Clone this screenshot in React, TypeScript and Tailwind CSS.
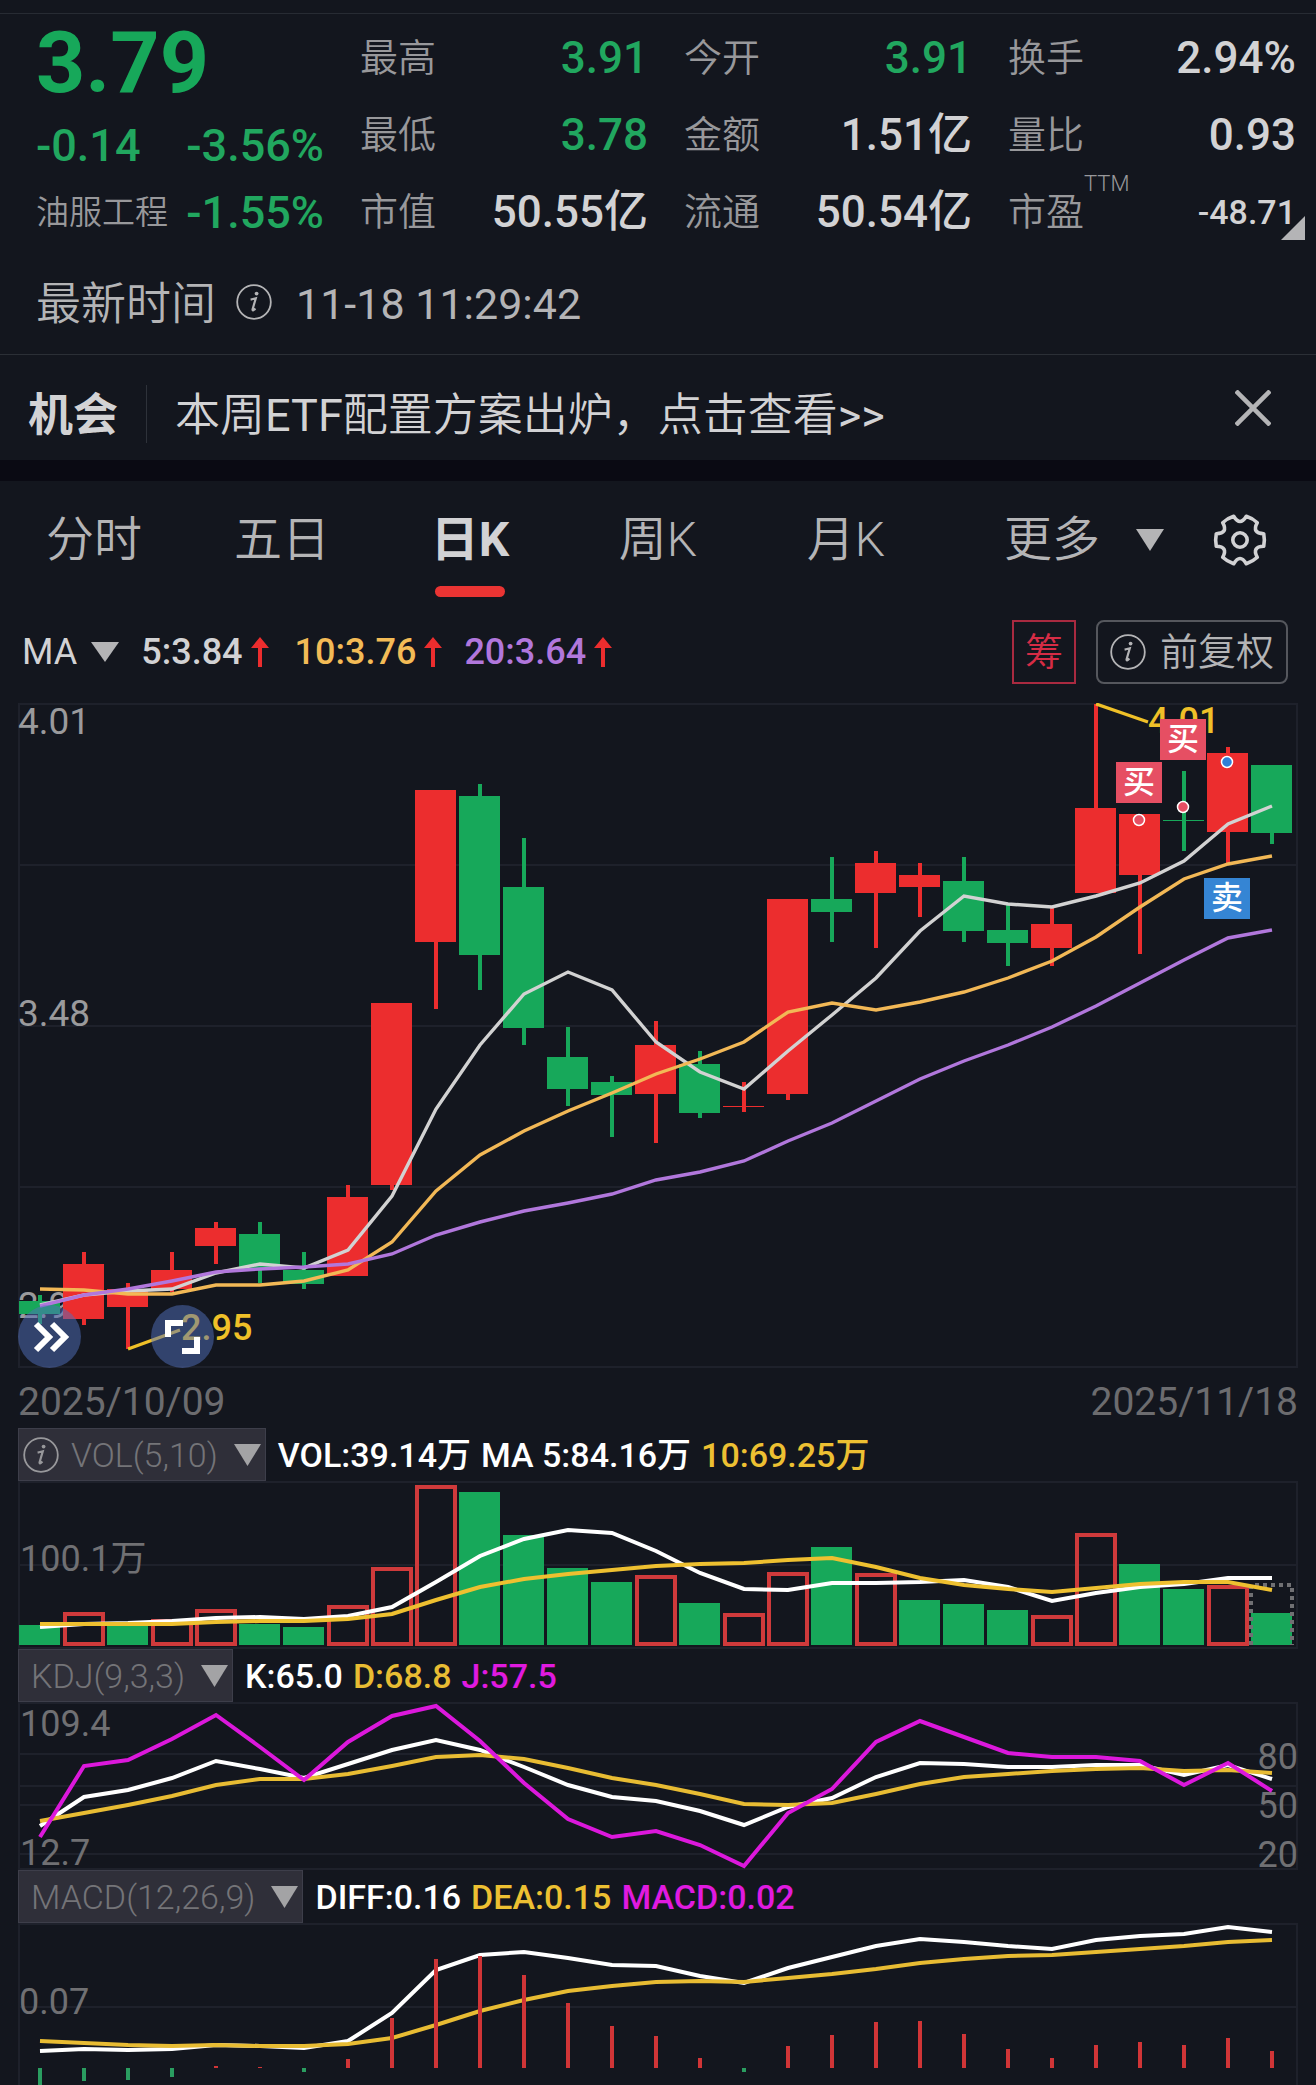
import React from "react";

const GREEN = "#17a85a";
const RED = "#ec2d2e";
const STEP = 44;
const FIRST_X = 40;
const cx = (i: number) => FIRST_X + i * STEP;
const line = (ys: number[]) => ys.map((y, i) => `${cx(i)},${y}`).join(" ");

// Every panel shares the same horizontal axis; y grows downwards from the top of the page.
// [rising, body top, body bottom, wick top, wick bottom]
type Candle = [boolean, number, number, number, number];
const candles: Candle[] = [
  [false, 1301, 1314, 1295, 1324],
  [true, 1264, 1319, 1252, 1325],
  [true, 1289, 1307, 1283, 1349],
  [true, 1270, 1289, 1252, 1292],
  [true, 1228, 1246, 1222, 1264],
  [false, 1234, 1269, 1222, 1283],
  [false, 1270, 1284, 1252, 1289],
  [true, 1197, 1276, 1185, 1276],
  [true, 1003, 1185, 1003, 1190],
  [true, 790, 942, 790, 1009],
  [false, 796, 955, 784, 990],
  [false, 887, 1028, 838, 1045],
  [false, 1057, 1089, 1027, 1106],
  [false, 1082, 1095, 1076, 1137],
  [true, 1045, 1094, 1021, 1143],
  [false, 1064, 1113, 1051, 1118],
  [true, 1106, 1107, 1082, 1112],
  [true, 899, 1094, 899, 1100],
  [false, 899, 912, 857, 942],
  [true, 863, 893, 851, 948],
  [true, 875, 887, 863, 917],
  [false, 881, 931, 857, 942],
  [false, 930, 943, 905, 966],
  [true, 924, 948, 906, 966],
  [true, 808, 893, 704, 893],
  [true, 814, 875, 814, 954],
  [false, 820, 821, 771, 851],
  [true, 753, 832, 747, 864],
  [false, 765, 833, 765, 844],
];
const ma5 = [1305, 1295, 1291, 1289, 1273, 1264, 1268, 1250, 1196, 1109, 1045, 994, 972, 990, 1042, 1072, 1089, 1051, 1015, 978, 931, 896, 904, 907, 896, 883, 861, 824, 806];
const ma10 = [1289, 1290, 1294, 1294, 1285, 1285, 1281, 1270, 1242, 1191, 1155, 1131, 1111, 1093, 1074, 1059, 1042, 1012, 1003, 1010, 1002, 992, 978, 961, 937, 907, 879, 864, 856];
const ma20 = [1306, 1295, 1289, 1281, 1272, 1269, 1267, 1264, 1254, 1235, 1222, 1211, 1203, 1194, 1180, 1172, 1161, 1141, 1123, 1101, 1079, 1061, 1045, 1027, 1006, 983, 960, 938, 930];

const volumes = [1625, 1612, 1624, 1619, 1609, 1624, 1627, 1605, 1567, 1485, 1492, 1535, 1568, 1582, 1575, 1603, 1613, 1572, 1547, 1573, 1600, 1604, 1610, 1615, 1533, 1564, 1589, 1585, 1613];
// Indexes of the bars drawn as a red outline.
const hollow = [1, 3, 4, 7, 8, 9, 14, 16, 17, 19, 23, 24, 27];
const vol5 = [1627, 1624, 1623, 1621, 1618, 1617, 1619, 1616, 1607, 1582, 1556, 1539, 1530, 1533, 1551, 1573, 1589, 1590, 1583, 1583, 1582, 1580, 1587, 1601, 1593, 1587, 1584, 1578, 1578];
const vol10 = [1624, 1624, 1624, 1624, 1622, 1621, 1621, 1619, 1614, 1600, 1587, 1579, 1574, 1570, 1566, 1564, 1563, 1560, 1558, 1567, 1578, 1585, 1589, 1592, 1588, 1584, 1582, 1582, 1590];

const kLine = [1826, 1797, 1790, 1778, 1761, 1769, 1778, 1764, 1750, 1740, 1750, 1767, 1785, 1797, 1801, 1811, 1825, 1807, 1798, 1777, 1763, 1764, 1767, 1767, 1765, 1765, 1775, 1765, 1779];
const dLine = [1821, 1813, 1805, 1796, 1785, 1779, 1779, 1774, 1766, 1757, 1755, 1759, 1768, 1778, 1785, 1794, 1804, 1805, 1803, 1794, 1784, 1777, 1774, 1771, 1769, 1768, 1771, 1770, 1773];
const jLine = [1837, 1766, 1760, 1739, 1715, 1747, 1780, 1742, 1716, 1706, 1741, 1783, 1819, 1837, 1831, 1845, 1866, 1813, 1789, 1742, 1721, 1737, 1753, 1757, 1757, 1761, 1785, 1763, 1791];

const diff = [2051, 2049, 2050, 2049, 2045, 2046, 2048, 2041, 2013, 1970, 1955, 1952, 1958, 1965, 1966, 1976, 1983, 1968, 1957, 1946, 1939, 1942, 1946, 1949, 1940, 1936, 1934, 1927, 1932];
const dea = [2041, 2043, 2045, 2046, 2045, 2046, 2046, 2044, 2038, 2025, 2011, 2000, 1991, 1986, 1982, 1981, 1982, 1978, 1974, 1969, 1963, 1959, 1956, 1955, 1952, 1949, 1946, 1942, 1940];
const macdBars = [2086, 2081, 2080, 2077, 2066, 2067, 2072, 2059, 2018, 1959, 1956, 1975, 2003, 2026, 2036, 2058, 2072, 2046, 2035, 2022, 2021, 2034, 2049, 2058, 2045, 2042, 2045, 2038, 2051];
const MACD_ZERO = 2068;

function Caret({ className }: { className: string }) {
  return (
    <svg viewBox="0 0 28 18" preserveAspectRatio="none" className={className} aria-hidden="true">
      <path d="M0 0H28L14 18Z" fill="currentColor" />
    </svg>
  );
}

function InfoIcon({ className }: { className: string }) {
  return (
    <svg viewBox="0 0 36 36" className={className} fill="none" stroke="currentColor" aria-hidden="true">
      <circle cx="18" cy="18" r="16.8" strokeWidth="1.8" />
      <circle cx="20.6" cy="9.6" r="1.9" fill="currentColor" stroke="none" />
      <path d="M14.6 15.6C16.6 15.2 18.2 14.6 19.8 14.2L16.6 25.2C16.3 26.8 17.4 26.8 19.4 24.6" strokeWidth="2.2" />
    </svg>
  );
}

function GearIcon({ className }: { className: string }) {
  return (
    <svg viewBox="-27 -27 54 54" className={className} fill="none" stroke="currentColor" aria-hidden="true">
      <path
        d="M23.7 -6.3Q25 0 23.7 6.3Q11.5 6.7 17.3 17.3Q13 21.5 6.3 23.7Q0 13.3 -6.3 23.7Q-13 21.5 -17.3 17.3Q-11.5 6.7 -23.7 6.3Q-25 0 -23.7 -6.3Q-11.5 -6.7 -17.3 -17.3Q-13 -21.5 -6.3 -23.7Q0 -13.3 6.3 -23.7Q13 -21.5 17.3 -17.3Q11.5 -6.7 23.7 -6.3Z"
        strokeWidth="3.6"
        strokeLinejoin="round"
      />
      <circle r="7.2" strokeWidth="3.6" />
    </svg>
  );
}

function UpArrow() {
  return (
    <svg viewBox="0 0 18 30" className="h-[30px] w-[18px] text-[#ec2d2e]" aria-hidden="true">
      <path d="M9 0L18 11H11V30H7V11H0Z" fill="currentColor" />
    </svg>
  );
}

type StatProps = { label: string; value: string; tone?: string };
function Stat({ label, value, tone = "text-[#d2d2d4]" }: StatProps) {
  return (
    <div className="flex h-[77px] items-center justify-between">
      <dt className="text-[38px] font-[350] text-[#98989b]">{label}</dt>
      <dd className={`text-[44px] font-medium ${tone}`}>{value}</dd>
    </div>
  );
}

function Quote() {
  const green = "text-[#21a75f]";
  return (
    <section className="mt-[13px] border-t border-[#272b33] pt-[5px]">
      <div className="grid grid-cols-4 gap-9 pr-5 pl-9">
        <div>
          <div className="flex h-[88px] items-center text-[86px] font-bold text-[#17a85a]">3.79</div>
          <div className={`flex h-[77px] items-center justify-between text-[45px] font-medium ${green}`}>
            <span>-0.14</span>
            <span>-3.56%</span>
          </div>
          <div className="flex h-[56px] items-center justify-between">
            <span className="text-[33px] font-[350] text-[#98989b]">油服工程</span>
            <span className={`text-[45px] font-medium ${green}`}>-1.55%</span>
          </div>
        </div>
        <dl>
          <Stat label="最高" value="3.91" tone="text-[#21a75f]" />
          <Stat label="最低" value="3.78" tone="text-[#21a75f]" />
          <Stat label="市值" value="50.55亿" />
        </dl>
        <dl>
          <Stat label="今开" value="3.91" tone="text-[#21a75f]" />
          <Stat label="金额" value="1.51亿" />
          <Stat label="流通" value="50.54亿" />
        </dl>
        <dl>
          <Stat label="换手" value="2.94%" />
          <Stat label="量比" value="0.93" />
          <div className="relative flex h-[77px] items-center justify-between">
            <dt className="flex text-[38px] font-[350] text-[#98989b]">
              市盈<span className="-mt-5 self-start text-[22px] font-light">TTM</span>
            </dt>
            <dd className="text-[34px] font-medium text-[#d2d2d4]">-48.71</dd>
            <svg viewBox="0 0 24 24" className="absolute -right-[9px] bottom-[10px] size-6" aria-hidden="true">
              <path d="M24 0V24H0Z" fill="#b4b4b6" />
            </svg>
          </div>
        </dl>
      </div>
      <div className="flex h-[104px] items-center px-9 pt-1 text-[#b4b4b6]">
        <span className="text-[45px] font-[350]">最新时间</span>
        <InfoIcon className="mb-1 ml-5 size-9" />
        <time className="ml-6 text-[43px]">11-18 11:29:42</time>
      </div>
    </section>
  );
}

function Banner() {
  return (
    <section className="flex h-[106px] items-center border-t border-[#2b2f36] pt-4 pl-7">
      <strong className="text-[45px] font-bold text-[#d2d2d4]">机会</strong>
      <span className="mb-1 ml-7 h-[58px] w-px bg-[#2e323a]" />
      <a href="#plan" className="ml-7 flex-1 text-[45px] font-[350] text-[#d2d2d4]">
        本周<span className="font-normal">ETF</span>配置方案出炉，点击查看<span className="font-normal">&gt;&gt;</span>
      </a>
      <button type="button" aria-label="关闭" className="mr-[45px] mb-4 text-[#b4b4b6]">
        <svg viewBox="0 0 36 36" className="size-9" stroke="currentColor" strokeWidth="4.5" aria-hidden="true">
          <path d="M1 1L35 35M35 1L1 35" />
        </svg>
      </button>
    </section>
  );
}

function Tabs() {
  const tabs = ["分时", "五日", "日K", "周K", "月K"];
  return (
    <nav className="grid h-[116px] grid-cols-7 text-[48px] font-[350] text-[#b4b4b6]">
      {tabs.map((t) => {
        const active = t === "日K";
        return (
          <button
            key={t}
            type="button"
            aria-pressed={active}
            className={active ? "relative pt-[2px] font-bold text-[#d2d2d4]" : "relative pt-[2px]"}
          >
            {t}
            {active && (
              <span className="absolute bottom-0 left-1/2 h-[11px] w-[70px] -translate-x-1/2 rounded-full bg-[#ea3433]" />
            )}
          </button>
        );
      })}
      <div className="col-span-2 flex items-center justify-between pt-[2px] pr-[49px] pl-16">
        <button type="button" className="flex items-center gap-9">
          更多
          <Caret className="h-[22px] w-7" />
        </button>
        <button type="button" aria-label="设置" className="text-[#d2d2d4]">
          <GearIcon className="size-[54px]" />
        </button>
      </div>
    </nav>
  );
}

function Averages() {
  return (
    <div className="flex h-[106px] items-center pt-1 pr-7 pl-[22px] text-[36px] font-medium">
      <button type="button" className="flex items-center gap-[14px] font-normal text-[#d2d2d4]">
        MA
        <Caret className="h-5 w-7 text-[#b4b4b6]" />
      </button>
      <span className="ml-[22px] flex items-center gap-2 text-[#d2d2d4]">
        5:3.84
        <UpArrow />
      </span>
      <span className="ml-[26px] flex items-center gap-2 text-[#f3bb56]">
        10:3.76
        <UpArrow />
      </span>
      <span className="ml-[22px] flex items-center gap-2 text-[#b177dc]">
        20:3.64
        <UpArrow />
      </span>
      <button
        type="button"
        className="ml-auto h-16 w-16 border-2 border-[#a92a40] text-[38px] font-[350] text-[#d62c45]"
      >
        筹
      </button>
      <button
        type="button"
        className="ml-5 flex h-16 items-center gap-[14px] rounded-lg border-2 border-[#55575d] px-3 text-[38px] font-[350] text-[#b4b4b6]"
      >
        <InfoIcon className="size-9" />
        前复权
      </button>
    </div>
  );
}

function Frame({ top, bottom, grid }: { top: number; bottom: number; grid: number[] }) {
  return (
    <g stroke="#1e212b" strokeWidth="2" fill="none">
      <rect x="19" y={top} width="1278" height={bottom - top} />
      {grid.map((y) => (
        <path key={y} d={`M19 ${y}H1297`} />
      ))}
    </g>
  );
}

function TradeBox({ x, y, text, color }: { x: number; y: number; text: string; color: string }) {
  return (
    <g>
      <rect x={x} y={y} width="46" height="41" fill={color} />
      <text x={x + 23} y={y + 31} textAnchor="middle" fontSize="32" fontWeight="500" fill="#ffffff">
        {text}
      </text>
    </g>
  );
}

function PriceChart() {
  return (
    <div className="relative">
      <svg viewBox="18 703 1280 665" className="block h-auto w-full" role="img" aria-label="日K线图">
        <Frame top={704} bottom={1367} grid={[865, 1026, 1187]} />
        <g fontSize="37" fill="#9a9a9c">
          <text x="18" y="734">4.01</text>
          <text x="18" y="1026">3.48</text>
          <text x="18" y="1318">2.95</text>
        </g>
        {candles.map(([up, top, bottom, high, low], i) => (
          <g key={i} fill={up ? RED : GREEN}>
            <rect x={cx(i) - 2} y={high} width="4" height={low - high} />
            <rect x={cx(i) - 21} y={top} width="41" height={bottom - top} />
          </g>
        ))}
        <g fill="none" strokeWidth="3.4">
          <polyline points={line(ma5)} stroke="#d2d2d2" />
          <polyline points={line(ma10)} stroke="#f2b856" />
          <polyline points={line(ma20)} stroke="#b177dc" />
          <path d="M1096 704L1148 722M128 1349L180 1330" stroke="#efc028" />
        </g>
        <g fontSize="36" fontWeight="500" fill="#efc028">
          <text x="1148" y="733">4.01</text>
          <text x="181" y="1340">2.95</text>
        </g>
        <TradeBox x={1116} y={762} text="买" color="#e64f63" />
        <TradeBox x={1160} y={719} text="买" color="#e64f63" />
        <TradeBox x={1204} y={878} text="卖" color="#3585d4" />
        <g stroke="#ffffff" strokeWidth="1.5">
          <circle cx="1139" cy="820" r="5.5" fill="#e64f63" />
          <circle cx="1183" cy="807" r="5.5" fill="#e64f63" />
          <circle cx="1227" cy="762" r="5.5" fill="#2f7fd6" />
        </g>
      </svg>
      <div className="absolute bottom-0 left-0 flex gap-[70px]">
        <button type="button" aria-label="展开" className="size-[63px] rounded-full bg-[#5270bb]/50">
          <svg viewBox="0 0 63 63" fill="none" stroke="#ffffff" strokeWidth="6" aria-hidden="true">
            <path d="M18 19L31 32L18 45M34 19L47 32L34 45" />
          </svg>
        </button>
        <button type="button" aria-label="全屏" className="size-[63px] rounded-full bg-[#5270bb]/50">
          <svg viewBox="0 0 63 63" fill="none" stroke="#ffffff" strokeWidth="6" aria-hidden="true">
            <path d="M17 32V18H32M46 32V46H31" />
          </svg>
        </button>
      </div>
    </div>
  );
}

type Reading = { text: string; tone: string };
function IndicatorHeader({ name, info, readings }: { name: string; info?: boolean; readings: Reading[] }) {
  return (
    <div className="flex h-[53px] items-center text-[34px] font-medium">
      <button
        type="button"
        className="flex h-full items-center border border-[#3d3e4a] bg-[#2f2f39] px-1 font-light text-[#747478]"
      >
        {info && <InfoIcon className="size-9 text-[#98989b]" />}
        <span className={info ? "pr-2 pl-3" : "px-2"}>{name}</span>
        <Caret className="ml-2 h-[22px] w-[27px] text-[#a3a3a5]" />
      </button>
      <p className="ml-3 flex gap-[10px]">
        {readings.map((r) => (
          <span key={r.text} className={r.tone}>
            {r.text}
          </span>
        ))}
      </p>
    </div>
  );
}

function VolumeChart() {
  const base = 1645;
  return (
    <svg viewBox="18 1481 1280 168" className="block h-auto w-full" role="img" aria-label="成交量">
      <Frame top={1482} bottom={1648} grid={[1565]} />
      <text x="20" y="1571" fontSize="36" fill="#707073">100.1万</text>
      {volumes.map((top, i) =>
        hollow.includes(i) ? (
          <rect
            key={i}
            x={cx(i) - 19}
            y={top + 2}
            width="38"
            height={base - top - 3}
            fill="none"
            stroke="#cf3a3b"
            strokeWidth="4"
          />
        ) : (
          <rect key={i} x={cx(i) - 21} y={top} width="41" height={base - top} fill={GREEN} />
        ),
      )}
      <path d="M1251 1645V1585H1292V1645" fill="none" stroke="#707073" strokeWidth="4" strokeDasharray="4 4" />
      <g fill="none" strokeWidth="4">
        <polyline points={line(vol5)} stroke="#ffffff" />
        <polyline points={line(vol10)} stroke="#eec030" />
      </g>
    </svg>
  );
}

function KdjChart() {
  return (
    <svg viewBox="18 1702 1280 168" className="block h-auto w-full" role="img" aria-label="KDJ">
      <Frame top={1703} bottom={1869} grid={[1754, 1786, 1805, 1854]} />
      <g fontSize="36" fill="#707073">
        <text x="20" y="1736">109.4</text>
        <text x="20" y="1865">12.7</text>
        <text x="1298" y="1769" textAnchor="end">80</text>
        <text x="1298" y="1818" textAnchor="end">50</text>
        <text x="1298" y="1867" textAnchor="end">20</text>
      </g>
      <g fill="none" strokeWidth="4">
        <polyline points={line(kLine)} stroke="#ffffff" />
        <polyline points={line(dLine)} stroke="#e8bc33" />
        <polyline points={line(jLine)} stroke="#dc18dc" />
      </g>
    </svg>
  );
}

function MacdChart() {
  return (
    <svg viewBox="18 1923 1280 162" className="block h-auto w-full" role="img" aria-label="MACD">
      <Frame top={1924} bottom={2100} grid={[2007]} />
      <text x="19" y="2014" fontSize="36" fill="#707073">0.07</text>
      <g fill="none" strokeWidth="4">
        <polyline points={line(diff)} stroke="#ffffff" />
        <polyline points={line(dea)} stroke="#e8bc33" />
      </g>
      {macdBars.map((y, i) => (
        <rect
          key={i}
          x={cx(i) - 2}
          y={Math.min(y, MACD_ZERO)}
          width="4"
          height={Math.abs(MACD_ZERO - y)}
          fill={y > MACD_ZERO ? "#2a9d60" : "#d03537"}
        />
      ))}
    </svg>
  );
}

export default function App() {
  return (
    <main className="w-full overflow-hidden bg-[#13161e] font-['Roboto','Noto_Sans_CJK_SC',sans-serif] leading-none">
      <Quote />
      <Banner />
      <div className="h-[21px] bg-[#0a0a13]" />
      <Tabs />
      <Averages />
      <div className="px-[18px]">
        <PriceChart />
        <div className="flex h-[60px] items-center justify-between pt-2 text-[39px] text-[#6c6c6f]">
          <time>2025/10/09</time>
          <time>2025/11/18</time>
        </div>
        <IndicatorHeader
          name="VOL(5,10)"
          info
          readings={[
            { text: "VOL:39.14万", tone: "text-white" },
            { text: "MA 5:84.16万", tone: "text-white" },
            { text: "10:69.25万", tone: "text-[#edc032]" },
          ]}
        />
        <VolumeChart />
        <IndicatorHeader
          name="KDJ(9,3,3)"
          readings={[
            { text: "K:65.0", tone: "text-white" },
            { text: "D:68.8", tone: "text-[#e8bc33]" },
            { text: "J:57.5", tone: "text-[#e01ae0]" },
          ]}
        />
        <KdjChart />
        <IndicatorHeader
          name="MACD(12,26,9)"
          readings={[
            { text: "DIFF:0.16", tone: "text-white" },
            { text: "DEA:0.15", tone: "text-[#edc032]" },
            { text: "MACD:0.02", tone: "text-[#e01ae0]" },
          ]}
        />
        <MacdChart />
      </div>
    </main>
  );
}
